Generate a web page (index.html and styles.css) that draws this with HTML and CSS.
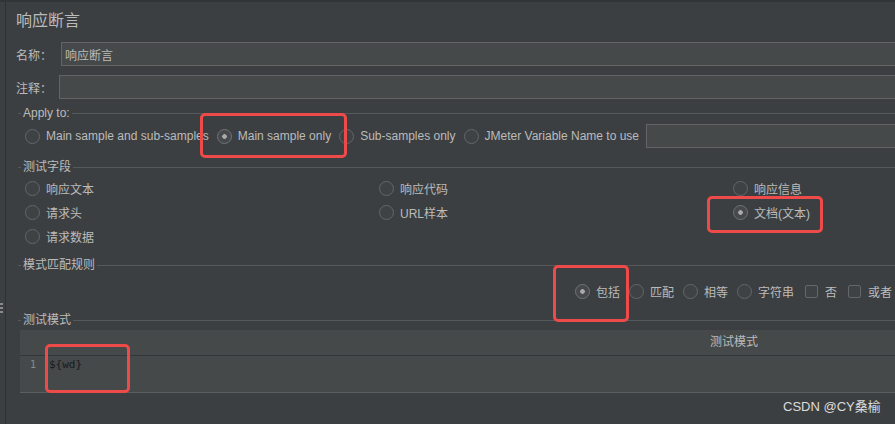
FILE: index.html
```html
<!DOCTYPE html>
<html lang="zh-CN">
<head>
    <meta charset="UTF-8">
    <title>响应断言</title>
    <link rel="stylesheet" href="styles.css">
</head>
<body>
    <div class="frame">
        <div class="gutter"><span class="grip"></span></div>
        <div class="panel">
            <h1 class="title">响应断言</h1>

            <div class="field">
                <label class="field-label name-label">名称：</label>
                <input class="text-input" value="响应断言">
            </div>
            <div class="field comment">
                <label class="field-label">注释：</label>
                <input class="text-input" value="">
            </div>

            <fieldset class="group apply">
                <legend>Apply to:</legend>
                <div class="choices row">
                    <label class="opt"><input type="radio" name="apply" class="radio">Main sample and sub-samples</label>
                    <label class="opt"><input type="radio" name="apply" class="radio" checked>Main sample only</label>
                    <label class="opt"><input type="radio" name="apply" class="radio">Sub-samples only</label>
                    <label class="opt"><input type="radio" name="apply" class="radio">JMeter Variable Name to use</label>
                    <input class="text-input var-name" value="">
                </div>
            </fieldset>

            <fieldset class="group fields">
                <legend>测试字段</legend>
                <div class="choices grid">
                    <label class="opt"><input type="radio" name="field" class="radio">响应文本</label>
                    <label class="opt"><input type="radio" name="field" class="radio">响应代码</label>
                    <label class="opt"><input type="radio" name="field" class="radio">响应信息</label>
                    <label class="opt"><input type="radio" name="field" class="radio">请求头</label>
                    <label class="opt"><input type="radio" name="field" class="radio">URL样本</label>
                    <label class="opt"><input type="radio" name="field" class="radio" checked>文档(文本)</label>
                    <label class="opt"><input type="radio" name="field" class="radio">请求数据</label>
                </div>
            </fieldset>

            <fieldset class="group rules">
                <legend>模式匹配规则</legend>
                <div class="choices match">
                    <label class="opt"><input type="radio" name="rule" class="radio" checked>包括</label>
                    <label class="opt"><input type="radio" name="rule" class="radio">匹配</label>
                    <label class="opt"><input type="radio" name="rule" class="radio">相等</label>
                    <label class="opt"><input type="radio" name="rule" class="radio">字符串</label>
                    <label class="opt"><input type="checkbox" class="check">否</label>
                    <label class="opt"><input type="checkbox" class="check">或者</label>
                </div>
            </fieldset>

            <fieldset class="group patterns">
                <legend>测试模式</legend>
                <div class="table">
                    <div class="table-head">测试模式</div>
                    <div class="table-row">
                        <span class="line-no">1</span>
                        <span class="code">${wd}</span>
                    </div>
                </div>
            </fieldset>
        </div>
    </div>

    <div class="mark mark-apply"></div>
    <div class="mark mark-field"></div>
    <div class="mark mark-rule"></div>
    <div class="mark mark-code"></div>

    <div class="watermark">CSDN @CY桑榆</div>
</body>
</html>
```

FILE: styles.css
```css
* {
    box-sizing: border-box;
}

body {
    margin: 0;
    height: 424px;
    overflow: hidden;
    position: relative;
    background-color: #3c3f41;
    color: #bbbbbb;
    font-family: 'Liberation Sans', 'Noto Sans CJK SC', sans-serif;
    font-size: 12px;
}

.frame {
    display: flex;
    width: 1460px;
    height: 424px;
    border-top: 2px solid #323537;
}

.gutter {
    width: 6px;
    flex-shrink: 0;
    border-right: 1px solid #2f3133;
    padding-top: 301px;
}

.grip {
    display: block;
    width: 3px;
    height: 2px;
    background-color: #8a8a8a;
    box-shadow: 0 4px 0 #8a8a8a, 0 8px 0 #8a8a8a;
}

.panel {
    flex: 1;
    padding: 0 12px 0 10px;
}

.title {
    margin: 9px 0 11px;
    font-size: 16px;
    line-height: 20px;
    font-weight: normal;
    color: #bbbbbb;
}

.field {
    display: flex;
    align-items: center;
    height: 24px;
}

.field.comment {
    margin-top: 9px;
}

.field-label {
    width: 43px;
    flex-shrink: 0;
}

.field-label.name-label {
    width: 45px;
}

.text-input {
    flex: 1;
    height: 24px;
    padding: 0 3px;
    background-color: #45494a;
    border: 1px solid #646464;
    color: #bbbbbb;
    font: inherit;
    outline: none;
}

/* titled groups: only the top edge of the border is drawn */
.group {
    margin: 0 0 0 2px;
    padding: 0;
    border: none;
    border-top: 1px solid #56595b;
    min-width: 0;
}

.group legend {
    margin-left: 3px;
    padding: 0 2px;
    line-height: 16px;
}

.group.apply {
    margin-top: 6px;
    padding-top: 3px;
}

.group.fields {
    margin-top: 11px;
    padding-top: 1px;
}

.group.rules {
    margin-top: 9px;
    padding-top: 6px;
}

.group.patterns {
    margin-top: 9px;
    padding-top: 2px;
}

.choices {
    padding-left: 6px;
}

.choices.row {
    display: flex;
    align-items: center;
    gap: 7px;
    height: 24px;
}

.choices.grid {
    display: grid;
    grid-template-columns: repeat(3, 354px);
    grid-auto-rows: 24px;
    align-items: center;
}

.choices.match {
    display: flex;
    justify-content: center;
    align-items: center;
    gap: 8px;
    height: 24px;
    padding-left: 0;
}

.opt {
    display: inline-flex;
    align-items: center;
    gap: 6px;
    white-space: nowrap;
}

.radio,
.check {
    appearance: none;
    margin: 0 0 0 1px;
    flex-shrink: 0;
    background-color: #3e4244;
    border: 1px solid #646769;
}

.radio {
    width: 15px;
    height: 15px;
    border-radius: 50%;
}

.radio:checked {
    border-color: #707375;
    background: radial-gradient(circle, #a9a9a9 0 2px, transparent 2.6px), #45494b;
}

.check {
    width: 13px;
    height: 13px;
    margin: 0 1px 0 3px;
    border-radius: 2px;
}

.table {
    margin-left: 2px;
    background-color: #45494a;
}

.table-head {
    height: 26px;
    line-height: 25px;
    text-align: center;
    border-bottom: 1px solid #33363a;
}

.table-row {
    display: flex;
    height: 37px;
    padding-top: 2px;
    border-bottom: 1px solid #5b5e60;
    line-height: 14px;
}

.line-no {
    width: 29px;
    padding-left: 10px;
    color: #8a8a8a;
    font-family: 'DejaVu Sans Mono', monospace;
    font-size: 10px;
}

.code {
    color: #1a1b1e;
    font-family: 'DejaVu Sans Mono', monospace;
    font-size: 11px;
}

/* red annotation boxes drawn over the form */
.mark {
    position: absolute;
    border: 3px solid #ef4a4a;
    border-radius: 5px;
}

.mark-apply {
    left: 200px;
    top: 113px;
    width: 147px;
    height: 45px;
}

.mark-field {
    left: 707px;
    top: 196px;
    width: 116px;
    height: 37px;
}

.mark-rule {
    left: 553px;
    top: 265px;
    width: 76px;
    height: 57px;
}

.mark-code {
    left: 45px;
    top: 344px;
    width: 85px;
    height: 49px;
}

.watermark {
    position: absolute;
    left: 783px;
    top: 398px;
    color: #dcdcdc;
    font-size: 13px;
    line-height: 18px;
}
```
